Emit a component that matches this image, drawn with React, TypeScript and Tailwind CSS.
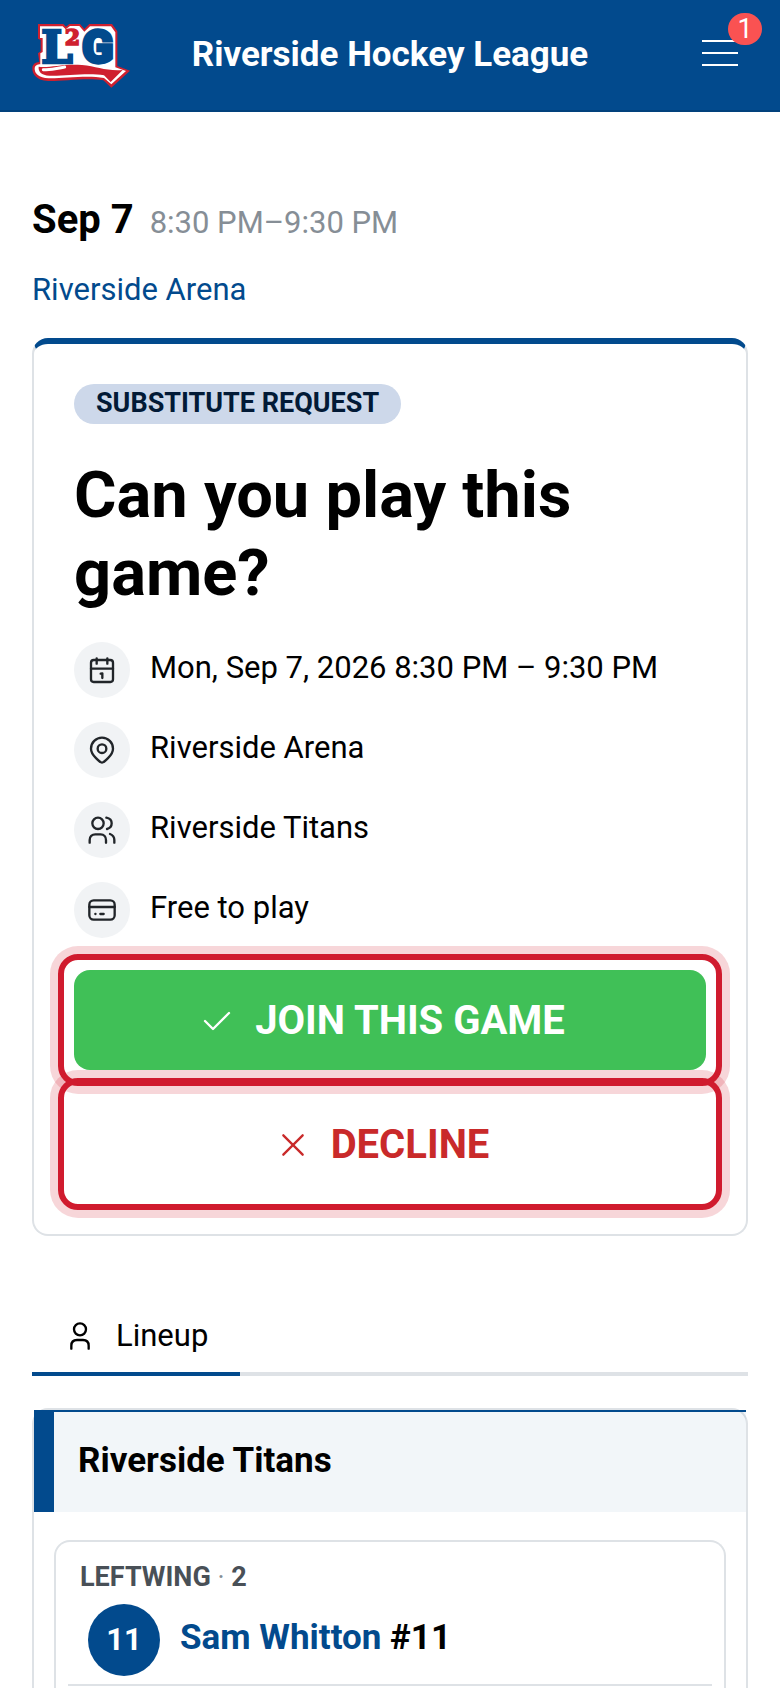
import type { ReactNode } from "react";

type Player = {
  id: string;
  name: string;
  number: number;
};

const players: Player[] = [{ id: "1", name: "Sam Whitton", number: 11 }];

function Icon({ children }: { children: ReactNode }) {
  return (
    <svg
      viewBox="0 0 84 84"
      className="size-7 shrink-0"
      fill="none"
      stroke="currentColor"
      strokeWidth="7"
      strokeLinecap="round"
      strokeLinejoin="round"
      aria-hidden="true"
    >
      {children}
    </svg>
  );
}

function Logo() {
  return (
    <svg viewBox="36 39 294 195" className="mt-1 w-[98px] h-[65px] overflow-visible" role="img" aria-label="L2G">
      {/* red edge, then white edge */}
      <path
        d="M54 42H130L138 50L148 42H180L193 57L208 42H276L292 64V168L330 182L274 233L250 211C200 202 130 214 84 213C50 212 36 192 37 174C38 162 46 157 58 156L54 130L62 124V90L54 86Z"
        fill="#cf202f"
      />
      <path
        d="M60 49H128L137 58L150 48H178L193 65L210 49H273L286 67V172L318 183L274 223L252 204C200 195 130 206 86 205C56 204 43 190 44 175C45 166 52 163 61 163V130L68 126V84H60Z"
        fill="#ffffff"
      />
      <g fontFamily="DejaVu Serif" fontWeight="700" strokeLinejoin="miter">
        <text x="64" y="159" fontSize="134" fill="#024a8d" stroke="#024a8d" strokeWidth="8">
          L
        </text>
        <text x="134" y="105" fontSize="66" fill="#cf202f" stroke="#cf202f" strokeWidth="5">
          2
        </text>
      </g>
      <text
        x="186"
        y="158"
        fontFamily="Roboto"
        fontWeight="900"
        fontSize="138"
        fill="#024a8d"
        stroke="#024a8d"
        strokeWidth="10"
      >
        G
      </text>
      {/* ribbon */}
      <path
        d="M56 170C90 174 130 160 186 165C230 169 260 184 308 180L272 216L252 196C205 187 130 199 88 197C64 196 54 184 56 170Z"
        fill="#cf202f"
      />
      <path d="M70 179C96 181 112 175 134 171" fill="none" stroke="#ffffff" strokeWidth="9" strokeLinecap="round" />
    </svg>
  );
}

const details = [
  {
    label: "Mon, Sep 7, 2026 8:30 PM – 9:30 PM",
    icon: (
      <>
        <rect x="9" y="12" width="66" height="66" rx="8" />
        <path d="M9 38H75M26 7V23M58 7V23" />
        <path d="M38 53L43 52V66" />
      </>
    ),
  },
  {
    label: "Riverside Arena",
    icon: (
      <>
        <path d="M42 80C38 80 9 58 9 38A33 33 0 0 1 75 38C75 58 46 80 42 80Z" />
        <circle cx="42" cy="38" r="13" />
      </>
    ),
  },
  {
    label: "Riverside Titans",
    icon: (
      <>
        <circle cx="30" cy="22" r="17" />
        <path d="M5 80V72C5 62 12 55 22 55H38C48 55 54 62 54 72V80" />
        <path d="M55 5C65 7 71 13 71 22C71 31 65 37 57 39M66 54C74 57 79 63 79 72V80" />
      </>
    ),
  },
  {
    label: "Free to play",
    icon: (
      <>
        <rect x="4" y="13" width="76" height="58" rx="13" />
        <path d="M4 33H80M22 54H22.5M37 54H47" />
      </>
    ),
  },
];

export default function App() {
  return (
    <div className="min-h-screen flex flex-col bg-white text-black font-[Roboto,sans-serif]">
      {/* HEADER */}
      <header className="h-28 px-8 pb-1 flex items-center justify-between bg-[#024a8d] border-b-2 border-[#02417c]">
        <Logo />
        <p className="pt-1 text-[35px] leading-10 font-bold text-white">Riverside Hockey League</p>
        <button
          type="button"
          aria-label="Menu"
          className="relative w-[98px] h-16 flex flex-col items-end justify-center gap-2.5 pr-2.5"
        >
          <span className="w-9 h-0.5 bg-white" />
          <span className="w-9 h-0.5 bg-white" />
          <span className="w-9 h-0.5 bg-white" />
          <span className="absolute -top-2 -right-3.5 w-[34px] h-8 rounded-full bg-[#fa5252] text-white text-[27px] leading-8 text-center">
            1
          </span>
        </button>
      </header>

      <main className="flex-1 flex flex-col px-8 pt-20">
        {/* GAME TIME */}
        <div className="flex items-baseline gap-4">
          <h1 className="text-[40px] leading-14 font-bold">Sep 7</h1>
          <p className="text-[31px] leading-10 text-[#868e96]">8:30 PM–9:30 PM</p>
        </div>
        <a href="#arena" className="mt-4 self-start text-[31px] leading-[52px] text-[#024a8d]">
          Riverside Arena
        </a>

        {/* SUBSTITUTE REQUEST */}
        <section className="mt-[22px] rounded-2xl border-2 border-t-6 border-[#dee2e6] border-t-[#024a8d] px-10 pt-10 pb-6">
          <span className="inline-block align-top rounded-full bg-[#cdd8ea] px-[22px] pb-0.5 text-[27px] leading-[38px] font-bold text-[#021a36]">
            SUBSTITUTE REQUEST
          </span>
          <h2 className="mt-8 text-[65px] leading-[78px] font-bold">Can you play this game?</h2>
          <ul className="mt-[30px] flex flex-col gap-6">
            {details.map((d) => (
              <li key={d.label} className="flex gap-5">
                <span className="size-14 shrink-0 rounded-full bg-[#f1f3f5] text-[#212529] flex items-center justify-center">
                  <Icon>{d.icon}</Icon>
                </span>
                <span className="text-[31px] leading-[52px]">{d.label}</span>
              </li>
            ))}
          </ul>

          <div className="mt-4 -mx-4 rounded-[20px] border-6 border-[#d01b2e] p-2.5 shadow-[0_0_0_8px_rgba(208,27,46,0.18)]">
            <button
              type="button"
              className="w-full h-[100px] pt-0.5 pr-3 flex items-center justify-center gap-6 rounded-2xl bg-[#40c057] text-white text-[40px] font-bold"
            >
              <Icon>
                <path d="M6 42L30 66L78 18" />
              </Icon>
              JOIN THIS GAME
            </button>
          </div>
          <div className="-mt-2 -mx-4 rounded-[20px] border-6 border-[#d01b2e] p-2.5 shadow-[0_0_0_8px_rgba(208,27,46,0.18)]">
            <button
              type="button"
              className="w-full h-[100px] pt-0.5 pr-3 flex items-center justify-center gap-6 rounded-2xl text-[#c92a2a] text-[40px] font-bold"
            >
              <Icon>
                <path d="M13 13L71 71M71 13L13 71" />
              </Icon>
              DECLINE
            </button>
          </div>
        </section>

        {/* TABS */}
        <div role="tablist" className="mt-16 flex border-b-4 border-[#dee2e6]">
          <button
            type="button"
            role="tab"
            aria-selected="true"
            className="-mb-1 h-[76px] pl-[34px] pr-8 flex items-center gap-[22px] border-b-4 border-[#024a8d] text-[31px]"
          >
            <Icon>
              <circle cx="42" cy="22" r="18" />
              <path d="M16 80V71C16 61 22 54 33 54H51C62 54 68 61 68 71V80" />
            </Icon>
            Lineup
          </button>
        </div>

        {/* LINEUP */}
        <section className="mt-8 flex-1 flex flex-col rounded-t-2xl border-2 border-b-0 border-[#dee2e6]">
          <h3 className="h-[102px] pl-6 pb-0.5 flex items-center border-t-2 border-l-20 border-[#024a8d] bg-[#024a8d]/5 text-[35px] font-bold">
            Riverside Titans
          </h3>
          <div className="mt-7 mx-5 flex-1 rounded-t-2xl border-2 border-b-0 border-[#dee2e6] px-3 pt-4 pb-0.5">
            <h4 className="px-3 text-[27px] leading-[38px] font-bold text-[#495057]">
              LEFTWING <span className="font-normal text-[#868e96]">·</span> 2
            </h4>
            <ul>
              {players.map((p) => (
                <li key={p.id} className="pl-5 py-2 flex items-center gap-5 border-b-2 border-[#dee2e6]">
                  <span className="size-[72px] rounded-full bg-[#024a8d] text-white text-[31px] font-bold flex items-center justify-center">
                    {p.number}
                  </span>
                  <p className="pb-1 text-[35px] leading-[50px] font-bold">
                    <a href="#player" className="text-[#024a8d]">
                      {p.name}
                    </a>{" "}
                    #{p.number}
                  </p>
                </li>
              ))}
            </ul>
          </div>
        </section>
      </main>
    </div>
  );
}
